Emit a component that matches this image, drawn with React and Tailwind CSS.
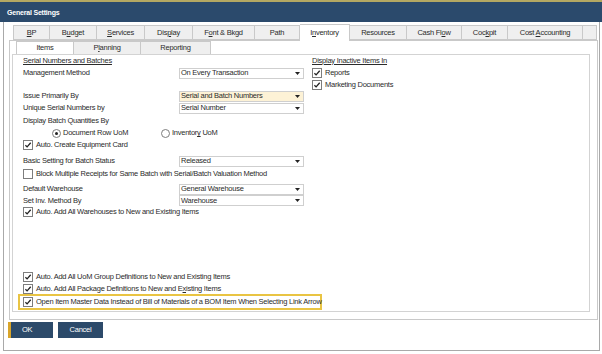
import React from "react";

const FONT = { fontFamily: '"Liberation Sans", Arial, sans-serif' };

function Check({ checked = true }) {
  return (
    <span className="inline-flex w-[10px] h-[10px] shrink-0 items-center justify-center border border-[#7d7d7d] bg-white">
      {checked && (
        <svg width="8" height="8" viewBox="0 0 8 8">
          <path d="M1.4 4.2 L3.1 5.9 L6.7 1.8" fill="none" stroke="#222" strokeWidth="1.3" />
        </svg>
      )}
    </span>
  );
}

function Radio({ on }) {
  return (
    <span className="inline-flex w-[9px] h-[9px] shrink-0 items-center justify-center rounded-full border border-[#7d7d7d] bg-white">
      {on && <span className="w-[3px] h-[3px] rounded-full bg-[#222]" />}
    </span>
  );
}

function Select({ value, hi }) {
  return (
    <div
      className={`flex h-[11px] w-[125px] items-center justify-between border border-[#cfcfcf] pl-[1px] pr-[3px] ${
        hi ? "bg-[#fdf2d6]" : "bg-white"
      }`}
    >
      <span>{value}</span>
      <svg width="5" height="3" viewBox="0 0 5 3">
        <path d="M0 0 H5 L2.5 3 Z" fill="#222" />
      </svg>
    </div>
  );
}

function Field({ label, value, hi, cls = "h-[12px]" }) {
  return (
    <div className={`flex items-center ${cls}`}>
      <span className="w-[156px] shrink-0">{label}</span>
      <Select value={value} hi={hi} />
    </div>
  );
}

function CheckRow({ children, checked = true, cls = "h-[12px]" }) {
  return (
    <div className={`flex items-center gap-[3px] ${cls}`}>
      <Check checked={checked} />
      <span className="whitespace-nowrap">{children}</span>
    </div>
  );
}

const mainTabs = [
  { w: "w-[37px]", l: <><u>B</u>P</> },
  { w: "w-[47px]", l: <>B<u>u</u>dget</> },
  { w: "w-[48px]", l: <><u>S</u>ervices</> },
  { w: "w-[48px]", l: <>Dis<u>p</u>lay</> },
  { w: "w-[62px]", l: <>F<u>o</u>nt &amp; Bkgd</> },
  { w: "w-[45px]", l: <>Path</> },
  { w: "w-[50px]", l: <>I<u>n</u>ventory</>, active: true },
  { w: "w-[57px]", l: <>Resources</> },
  { w: "w-[55px]", l: <>Cash Fl<u>o</u>w</> },
  { w: "w-[46px]", l: <>Coc<u>k</u>pit</> },
  { w: "w-[75px]", l: <>Cost <u>A</u>ccounting</> },
  { w: "w-[14px]", l: null },
];

const subTabs = [
  { w: "w-[58px]", l: <>Items</>, active: true },
  { w: "w-[67px]", l: <>P<u>l</u>anning</> },
  { w: "w-[70px]", l: <>Reporting</> },
];

export default function App() {
  return (
    <div
      className="w-[602px] h-[354px] overflow-hidden bg-white text-[7.5px] tracking-[-0.25px] text-[#2b2b2b] leading-none"
      style={FONT}
    >
      <div className="h-[2px] bg-[#b4a862]" />
      <div className="flex h-[20px] items-center bg-[#2b4a6c] pl-[7px] text-[7px] font-bold tracking-[-0.2px] text-white">
        General Settings
      </div>

      <div className="ml-[3px] flex h-[329px] w-[597px] flex-col border-x border-b border-[#a9a9a9]">
        {/* main tabs */}
        <div className="ml-[9px] mt-[3px] flex h-[15px]">
          {mainTabs.map((t, i) => (
            <div
              key={i}
              className={`${t.w} flex items-center justify-center border-t border-r border-[#c9c9c9] ${
                i === 0 ? "border-l" : ""
              } ${t.active ? "relative z-10 -mt-[1px] h-[17px] bg-white" : "h-[15px] border-b bg-[#efefef]"}`}
            >
              {t.l && <span className="whitespace-nowrap">{t.l}</span>}
            </div>
          ))}
        </div>

        {/* tab page */}
        <div className="ml-[5px] flex h-[280px] w-[589px] flex-col border border-[#c9c9c9] bg-white">
          <div className="ml-[6px] flex h-[13px]">
            {subTabs.map((t, i) => (
              <div
                key={i}
                className={`${t.w} flex h-[13px] items-center justify-center border-t border-r border-[#c9c9c9] ${
                  i === 0 ? "border-l" : ""
                } ${t.active ? "relative z-10 bg-white" : "bg-[#efefef]"}`}
              >
                <span className="whitespace-nowrap">{t.l}</span>
              </div>
            ))}
          </div>

          <div className="ml-[2px] flex h-[258px] w-[578px] border border-[#d3d3d3] bg-white">
            {/* left column */}
            <div className="flex w-[299px] flex-col pl-[10px]">
              <div className="flex h-[11px] items-center">
                <span className="underline">Serial Numbers and Batches</span>
              </div>
              <Field label="Management Method" value="On Every Transaction" cls="mt-[1px] h-[12px]" />
              <Field label="Issue Primarily By" value="Serial and Batch Numbers" hi cls="mt-[11px] h-[12px]" />
              <Field label="Unique Serial Numbers by" value="Serial Number" />
              <div className="mt-[1px] flex h-[12px] items-center">Display Batch Quantities By</div>
              <div className="flex h-[12px] items-center">
                <span className="ml-[29px] flex w-[109px] items-center gap-[2px]">
                  <Radio on />
                  <span>Document Row UoM</span>
                </span>
                <span className="flex items-center gap-[2px]">
                  <Radio />
                  <span>
                    Inventor<u>y</u> UoM
                  </span>
                </span>
              </div>
              <CheckRow>Auto. Create Equipment Card</CheckRow>
              <Field label="Basic Setting for Batch Status" value="Released" cls="mt-[4px] h-[12px]" />
              <CheckRow checked={false} cls="mt-[1px] h-[12px]">
                Block Multiple Receipts for Same Batch with Serial/Batch Valuation Method
              </CheckRow>
              <Field label="Default Warehouse" value="General Warehouse" cls="mt-[3px] h-[12px]" />
              <Field label="Set Inv. Method By" value="Warehouse" cls="h-[11px]" />
              <CheckRow>Auto. Add All Warehouses to New and Existing Items</CheckRow>

              <CheckRow cls="mt-[53px] h-[12px]">Auto. Add All UoM Group Definitions to New and Existing Items</CheckRow>
              <CheckRow cls="h-[11px]">
                Auto. Add All Package Definitions to New and E<u>x</u>isting Items
              </CheckRow>
              <div className="-ml-[5px] flex h-[16px] w-[304px] items-center gap-[3px] border-2 border-[#e9c443] pl-[3px]">
                <Check />
                <span className="whitespace-nowrap">
                  Open Item Master Data Instead of Bill of Materials of a BOM Item When Selecting Link Arrow
                </span>
              </div>
            </div>

            {/* right column */}
            <div className="flex flex-col">
              <div className="flex h-[11px] items-center">
                <span className="underline">Display Inactive Items In</span>
              </div>
              <CheckRow cls="mt-[1px] h-[12px]">Reports</CheckRow>
              <CheckRow cls="h-[11px]">Marketing Documents</CheckRow>
            </div>
          </div>
        </div>

        {/* buttons */}
        <div className="ml-[4px] mt-[2px] flex gap-[5px] text-white">
          <div className="flex h-[16px] w-[45px] items-center border-l-[3px] border-[#d9a52a] bg-[#2c4a6a] pl-[11px]">
            OK
          </div>
          <div className="flex h-[16px] w-[45px] items-center justify-center bg-[#2c4a6a]">Cancel</div>
        </div>
      </div>
    </div>
  );
}
